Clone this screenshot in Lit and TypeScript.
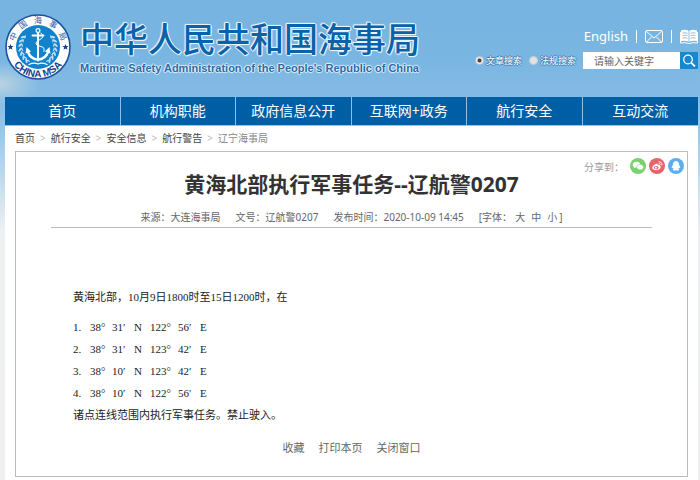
import { LitElement, html, css, svg } from "lit";
import { customElement } from "lit/decorators.js";

const NAV = ["首页", "机构职能", "政府信息公开", "互联网+政务", "航行安全", "互动交流"];
const CRUMBS = ["首页", "航行安全", "安全信息", "航行警告"];
const POINTS = [
  ["1.", "38", "31", "N", "122", "56", "E"],
  ["2.", "38", "31", "N", "123", "42", "E"],
  ["3.", "38", "10", "N", "123", "42", "E"],
  ["4.", "38", "10", "N", "122", "56", "E"],
];
const RING = [
  ["中", "13%"],
  ["国", "31%"],
  ["海", "50%"],
  ["事", "69%"],
  ["局", "87%"],
];
const LEAVES = [-34, -20, -6, 8, 22, 36, 50];

@customElement("msa-header")
class MsaHeader extends LitElement {
  static styles = css`
    :host { display: block; }
    .bar { display: flex; align-items: flex-start; justify-content: space-between; height: 97px; }
    .brand { display: flex; align-items: flex-start; }
    .emblem { width: 66px; height: 66px; margin-top: 14px; flex: none; }
    .names { margin: 18px 0 0 9px; white-space: nowrap; }
    .zh {
      margin: 0; font-size: 34px; line-height: 43px; font-weight: 500; color: #0a62a8;
      text-shadow: 1px 0 #e9f4fc, -1px 0 #e9f4fc, 0 1px #e9f4fc, 0 -1px #e9f4fc, 1px 1px 1px #e9f4fc, -1px -1px 1px #e9f4fc;
    }
    .en {
      margin: 0; font: 11px/14px "Liberation Sans", sans-serif; font-weight: 700; color: #2d6ba6;
      text-shadow: 1px 0 1px #e6f2fb, -1px 0 1px #e6f2fb, 0 1px 1px #e6f2fb, 0 -1px 1px #e6f2fb;
    }
    .tools { display: flex; flex-direction: column; align-items: flex-end; padding-top: 27px; }
    .links { display: flex; align-items: center; height: 18px; margin-bottom: 7px; }
    .links a { color: #fff; text-decoration: none; display: flex; font-size: 13px; line-height: 18px; }
    .sep { width: 1px; height: 13px; background: #fff; margin: 0 8px; }
    form { display: flex; align-items: center; }
    label { display: flex; align-items: center; font-size: 9px; line-height: 12px; color: #fff; margin-right: 7px;
      text-shadow: 1px 0 #3f7fb4, -1px 0 #3f7fb4, 0 1px #3f7fb4, 0 -1px #3f7fb4; }
    .radio { appearance: none; box-sizing: border-box; width: 9px; height: 9px; margin: 0 2px 0 0; border-radius: 50%;
      background: #e2e2e2; border: 1px solid #c4c8cc; }
    .radio:checked { background: radial-gradient(circle, #444 0 30%, #eee 50%); }
    .query { box-sizing: border-box; width: 97px; height: 17px; border: 0; border-radius: 0; background: #fff;
      padding: 0 0 0 11px; font: inherit; font-size: 10px; color: #555; outline: none; }
    .query::placeholder { color: #666; opacity: 1; }
    .go { width: 18px; height: 17px; padding: 0; border: 0; background: #1787d2; display: flex;
      align-items: center; justify-content: center; }
  `;
  leaf(angle: number) {
    const a = (angle * Math.PI) / 180;
    const x = 33 + 18 * Math.cos(a);
    const y = 33 + 18 * Math.sin(a);
    return svg`<ellipse cx=${x} cy=${y} rx="2.500" ry="1" transform="rotate(${angle + 50} ${x} ${y})"></ellipse>
      <ellipse cx=${x - 2} cy=${y} rx="1.800" ry=".7" transform="rotate(${angle + 110} ${x - 2} ${y})"></ellipse>`;
  }
  render() {
    return html`
      <header class="bar">
        <div class="brand">
          <svg class="emblem" viewBox="0 0 66 66" role="img" aria-label="中国海事局">
            <defs>
              <path id="top" d="M9 33a24 24 0 0 1 48 0"></path>
              <path id="bottom" d="M2.800 33a30.200 30.200 0 0 0 60.400 0"></path>
            </defs>
            <circle cx="33" cy="33" r="32" fill="#fff" stroke="#1d519f" stroke-width="1.600"></circle>
            <circle cx="33" cy="33" r="22" fill="#1282cc"></circle>
            <g font-family="Noto Sans CJK SC, sans-serif" fill="#2c5aa5" font-size="8" text-anchor="middle">
              ${RING.map(([c, at]) => svg`<text><textPath href="#top" startOffset=${at}>${c}</textPath></text>`)}
            </g>
            <text font-family="Liberation Sans, sans-serif" font-size="10" font-weight="700" fill="#173f8c"
              text-anchor="middle"><textPath href="#bottom" startOffset="50%">CHINA MSA</textPath></text>
            <g fill="#173f8c">
              <path d="M5.500 30l.8 2.100h2.300l-1.800 1.400.7 2.200-2-1.300-2 1.300.7-2.200-1.800-1.400h2.300z"></path>
              <path d="M60.500 30l.8 2.100h2.300l-1.800 1.400.7 2.200-2-1.300-2 1.300.7-2.200-1.800-1.400h2.300z"></path>
            </g>
            <g fill="#fff" opacity=".75">
              ${LEAVES.map((a) => this.leaf(a))}
              <g transform="translate(66 0) scale(-1 1)">${LEAVES.map((a) => this.leaf(a))}</g>
            </g>
            <g fill="none" stroke="#fff" stroke-linecap="round">
              <circle cx="33" cy="16.500" r="1.900" stroke-width="1.200"></circle>
              <path d="M33 19v26M27.500 21.500h11" stroke-width="1.900"></path>
              <path d="M22.500 37q3 8.500 10.500 8.500T43.500 37" stroke-width="2.400"></path>
              <path d="M36 19q4 4-1 6.500t-4 4.500 5 2.500 3 5" stroke-width="1"></path>
              <path d="M24 50.500q5-2.500 9-.5 4-2 9 .5" stroke-width="1.300"></path>
            </g>
            <path d="M20.500 39.500l1-6.500 4.500 4.500zM45.500 39.500l-1-6.500-4.500 4.500zM31 45h4l-2 3z" fill="#fff"></path>
          </svg>
          <div class="names">
            <h1 class="zh">中华人民共和国海事局</h1>
            <p class="en">Maritime Safety Administration of the People's Republic of China</p>
          </div>
        </div>
        <div class="tools">
          <div class="links">
            <a href="#">English</a><span class="sep"></span>
            <a href="#" aria-label="邮箱"><svg width="18" height="13" viewBox="0 0 18 13" fill="none" stroke="#fff">
              <rect x=".5" y=".5" width="17" height="12" rx="1.500"></rect>
              <path d="M1.500 1.500L9 8l7.500-6.500M1.500 12l5.500-5.500M16.500 12L11 6.500"></path></svg></a>
            <span class="sep"></span>
            <a href="#" aria-label="阅读"><svg width="18" height="15" viewBox="0 0 18 15">
              <path d="M1 1.500Q5.500 0 9 2q3.500-2 8-.5V12q-4.500-1-8 1-3.500-2-8-1z" fill="#fff"></path>
              <path d="M.5 3v11q4.500-1 8.500.6 4-1.600 8.500-.6V3" fill="none" stroke="#fff"></path>
              <path d="M9 2v11M2.500 4q3-.6 5 .3M2.500 6.500q3-.6 5 .3M2.500 9q3-.6 5 .3M10.500 4.300q2-.9 5-.3M10.500 6.800q2-.9 5-.3M10.500 9.300q2-.9 5-.3" fill="none" stroke="#6fafdc" stroke-width=".8"></path></svg></a>
          </div>
          <form>
            <label><input class="radio" type="radio" name="kind" checked>文章搜索</label>
            <label><input class="radio" type="radio" name="kind">法规搜索</label>
            <input class="query" type="text" placeholder="请输入关键字" aria-label="请输入关键字">
            <button class="go" type="button" aria-label="搜索"><svg width="14" height="14" viewBox="0 0 14 14" fill="none" stroke="#fff">
              <circle cx="6" cy="5.500" r="4.300" stroke-width="1.300"></circle>
              <path d="M9.200 8.700L13 12.500" stroke-width="1.800"></path></svg></button>
          </form>
        </div>
      </header>`;
  }
}

@customElement("notice-article")
class NoticeArticle extends LitElement {
  static styles = css`
    :host { display: block; }
    a { color: inherit; text-decoration: none; }
    .panel { border: 1px solid #bcbcbc; padding: 0 35px; color: #555; }
    .share { display: flex; justify-content: flex-end; align-items: center; gap: 3px; margin: 5px -32px 0 0;
      height: 18px; font-size: 10px; color: #999; }
    .share .word { margin-right: 3px; }
    .share a, .share svg { display: block; width: 16px; height: 16px; }
    h2 { margin: 0; text-align: center; font-size: 21px; line-height: 18px; font-weight: 700; color: #333; }
    .meta { display: flex; justify-content: center; font-size: 10px; line-height: 16px; gap: 15px;
      margin-top: 16px; padding-bottom: 2px; border-bottom: 1px solid #bcbcbc; color: #666; }
    .size { display: flex; }
    .size button { font: inherit; color: inherit; background: none; border: 0; padding: 0; margin-left: 6px; }
    .size button:first-of-type { margin-left: 3px; }
    .size button:last-of-type { margin-right: 2px; }
    .body { margin: 58px 0 0 22px; font: 11px/22px "Liberation Serif", "Noto Sans CJK SC", serif; color: #222; }
    .body p { margin: 0; }
    .points { list-style: none; margin: 8px 0 0; padding: 0; }
    .points li { display: grid; grid-template-columns: 17px 22px 22px 16px 28px 22px 10px; }
    .ops { display: flex; justify-content: center; gap: 14px; font-size: 11px; line-height: 18px;
      margin: 13px 0 0; padding-bottom: 19px; color: #666; }
  `;
  render() {
    return html`
      <article class="panel">
        <div class="share">
          <span class="word">分享到：</span>
          <a href="#" aria-label="微信"><svg viewBox="0 0 16 16"><circle cx="8" cy="8" r="8" fill="#7bd070"></circle>
            <path d="M6.500 3.700c-2.200 0-3.800 1.300-3.800 3 0 1 .5 1.800 1.300 2.300l-.3 1.300 1.500-.8c3.300.6 5.100-1 5.100-2.800 0-1.700-1.600-3-3.800-3z" fill="#fff"></path>
            <path d="M10.200 6.400c-1.900 0-3.400 1.200-3.400 2.700s1.500 2.700 3.400 2.700l.9-.1 1.300.7-.3-1.200c.9-.5 1.400-1.200 1.400-2.100 0-1.500-1.400-2.700-3.300-2.700z" fill="#fff" stroke="#7bd070" stroke-width=".5"></path></svg></a>
          <a href="#" aria-label="微博"><svg viewBox="0 0 16 16"><circle cx="8" cy="8" r="8" fill="#e8636c"></circle>
            <path d="M10.500 7.600c.3-1-.8-1.200-2-.7.300-1.300-.8-1.500-2.200-.7C4.600 7.100 3.200 8.600 3.200 9.700c0 1.500 1.800 2.400 3.900 2.400 2.600 0 4.600-1.400 4.600-2.800 0-.9-.5-1.400-1.200-1.700z" fill="#fff"></path>
            <ellipse cx="7.200" cy="9.600" rx="2.500" ry="1.700" fill="#e8636c"></ellipse><circle cx="6.900" cy="9.700" r="1" fill="#fff"></circle>
            <path d="M9.500 3.900c2.300-.4 3.900 1.200 3.400 3.400M9.700 5.600c1.100-.1 1.700.5 1.500 1.600" fill="none" stroke="#fff" stroke-width=".9"></path></svg></a>
          <a href="#" aria-label="QQ"><svg viewBox="0 0 16 16"><circle cx="8" cy="8" r="8" fill="#5caeee"></circle>
            <path d="M8 3C6.200 3 5 4.300 5 6.200c0 .9-.8 1.600-1.100 2.700-.2.700-.1 1.500.2 1.500s.6-.4.800-.8c.1.600.4 1.100.8 1.500-.5.200-.8.500-.8.800 0 .8 2.400.8 3.100.3.700.5 3.100.5 3.100-.3 0-.3-.3-.6-.8-.8.400-.4.700-.9.800-1.500.200.400.5.800.8.800s.4-.8.200-1.500C11.800 7.800 11 7.100 11 6.200 11 4.300 9.800 3 8 3z" fill="#fff"></path></svg></a>
        </div>
        <h2>黄海北部执行军事任务--辽航警0207</h2>
        <div class="meta">
          <span>来源：大连海事局</span><span>文号：辽航警0207</span><span>发布时间：2020-10-09 14:45</span>
          <span class="size">[字体：<button type="button">大</button><button type="button">中</button><button type="button">小</button>]</span>
        </div>
        <div class="body">
          <p>黄海北部，10月9日1800时至15日1200时，在</p>
          <ol class="points">
            ${POINTS.map(
              ([n, a, b, ns, c, d, ew]) => html`<li>
                <span>${n}</span><span>${a}°</span><span>${b}′</span><span>${ns}</span><span>${c}°</span><span>${d}′</span><span>${ew}</span>
              </li>`
            )}
          </ol>
          <p>诸点连线范围内执行军事任务。禁止驶入。</p>
        </div>
        <div class="ops"><a href="#">收藏</a><a href="#">打印本页</a><a href="#">关闭窗口</a></div>
      </article>`;
  }
}

@customElement("app-root")
class AppRoot extends LitElement {
  static styles = css`
    :host {
      display: block; box-sizing: border-box; min-height: 100vh; padding: 0 2px 0 5px;
      font-family: "Noto Sans", "Noto Sans CJK SC", sans-serif;
      background:
        radial-gradient(40px 22px at 0 84px, #b9d3e2, transparent),
        linear-gradient(#76b3e0 0, #7ab6e2 60px, #84bbe5 97px, #9ccbed 140px, #eef0f1 230px, #efefef);
    }
    a { color: inherit; text-decoration: none; }
    .nav { display: grid; grid-template-columns: repeat(6, 1fr); background: #005fa4; border-bottom: 1px solid #9cc4e2; }
    .nav a { color: #fff; font-size: 14px; line-height: 28px; text-align: center; border-right: 1px solid #8fc0e4; }
    .nav a:last-child { border-right: 0; }
    .sheet { background: #fff; padding: 0 10px 4px; }
    .crumbs { display: flex; gap: 5px; font-size: 10px; line-height: 25px; color: #444; }
    .crumbs i { font-style: normal; color: #bbb; }
    .crumbs .here { color: #888; }
  `;
  render() {
    return html`
      <msa-header></msa-header>
      <nav class="nav">${NAV.map((t) => html`<a href="#">${t}</a>`)}</nav>
      <main class="sheet">
        <div class="crumbs">${CRUMBS.map((t) => html`<a href="#">${t}</a><i>&gt;</i>`)}<span class="here">辽宁海事局</span></div>
        <notice-article></notice-article>
      </main>`;
  }
}
